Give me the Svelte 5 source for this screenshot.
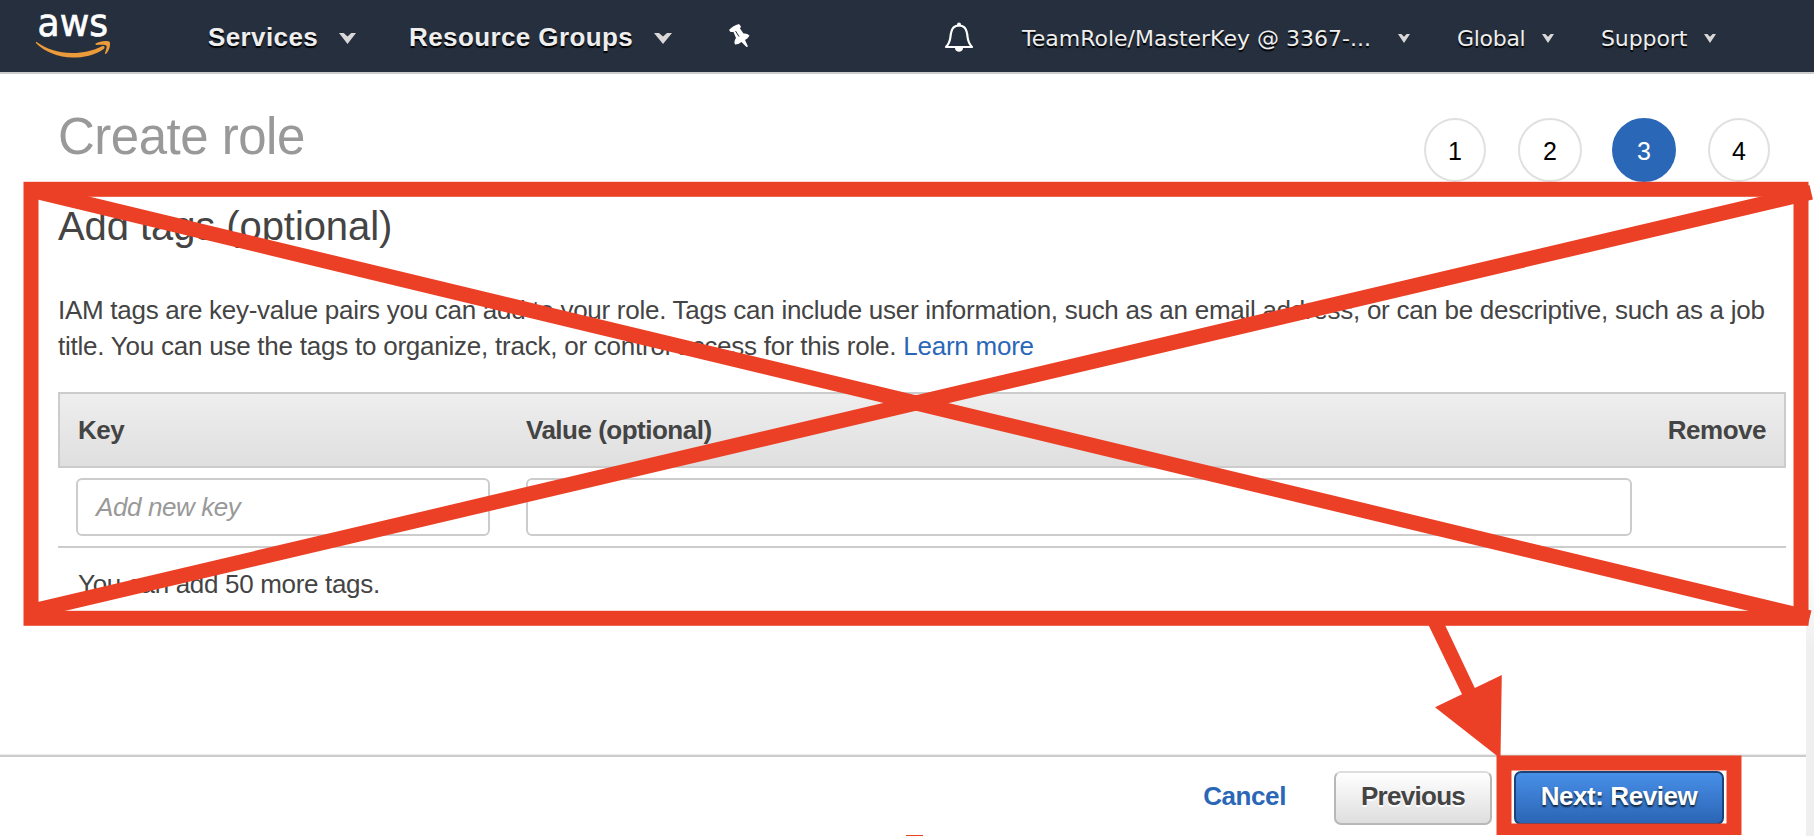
<script>
  const steps = [1, 2, 3, 4];
  const current = 3;
</script>

{#snippet caret(w, h)}
  <svg class="caret" width={w} height={h} viewBox="0 0 18 11" preserveAspectRatio="none">
    <path d="M0 0H5L9 3.500L13 0H18L9 11Z" fill="#d9d7d7" />
  </svg>
{/snippet}

<div class="page">
  <header>
    <svg class="logo" width="76" height="50" viewBox="0 0 76 50">
      <text x="1.500" y="28" textLength="70.500" lengthAdjust="spacingAndGlyphs">aws</text>
      <path d="M0.300 33.800C10 41 22 45 36 45C48 45 57 42.600 66 38.200C68 37.300 69.700 39.500 67.700 41C59 47.500 47 49.600 37 49.600C22 49.600 9 43.800 0.300 35.600Q-0.800 34 0.300 33.800Z" fill="#ec9b3b" />
      <path d="M59.700 35.600C64 32.600 72 32.300 73.700 34C74.800 37 73 43 70.300 45.600C69.300 46.300 68.600 45.900 69 44.900C70.200 41.700 71.200 38.500 70.400 37.500C69 36.400 64.500 36.700 61 37C59.600 37.100 58.900 36.300 59.700 35.600Z" fill="#ec9b3b" />
    </svg>
    <nav class="left">
      <a class="services"><span>Services</span> {@render caret(17, 11)}</a>
      <a class="groups"><span>Resource Groups</span> {@render caret(18, 11)}</a>
      <svg class="pin" width="22" height="24" viewBox="0 0 22 24">
        <path d="M0 6Q4 1.500 10 0L12 2.500L11 4.500L14.500 9.500Q18 9 20.500 11.500Q19 15 16 16L19 22.500L17.500 23L12.500 18Q9.500 20.500 6 20.500Q4.500 17.500 7 14L4.500 8L1.500 8Z" fill="#fff" />
        <path d="M6.500 7L10 12.500" stroke="#262f3e" stroke-width="1" />
      </svg>
    </nav>
    <nav class="right">
      <svg class="bell" width="30" height="32" viewBox="0 0 30 32">
        <path d="M2 25C7 20 6 16 7 11C8 5 11 3.500 15 3.500S22 5 23 11C24 16 23 20 28 25Z" fill="none" stroke="#fff" stroke-width="2.200" stroke-linejoin="round" />
        <circle cx="15" cy="2.500" r="2" fill="#fff" />
        <path d="M11 26H19C19 31 11 31 11 26Z" fill="#fff" />
      </svg>
      <a class="account"><span>TeamRole/MasterKey @ 3367-...</span> {@render caret(12, 9)}</a>
      <a class="region"><span>Global</span> {@render caret(12, 9)}</a>
      <a class="support"><span>Support</span> {@render caret(12, 9)}</a>
    </nav>
  </header>

  <main>
    <div class="title">
      <h1>Create role</h1>
      <ol>
        {#each steps as step}
          <li class:active={step === current}>{step}</li>
        {/each}
      </ol>
    </div>
    <h2>Add tags (optional)</h2>
    <p class="intro"><span class="l1">IAM tags are key-value pairs you can add to your role. Tags can include user information, such as an email address, or can be descriptive, such as a job</span><br /><span class="l2">title. You can use the tags to organize, track, or control access for this role. <a>Learn more</a></span></p>
    <div class="thead"><b class="key">Key</b><b class="val">Value (optional)</b><b class="rem">Remove</b></div>
    <div class="row"><div class="field k">Add new key</div><div class="field v"></div></div>
    <p class="more">You can add 50 more tags.</p>
  </main>

  <footer>
    <a class="cancel">Cancel</a>
    <button class="previous">Previous</button>
    <button class="next">Next: Review</button>
  </footer>
  <div class="gutter"></div>

  <svg class="marks" width="1814" height="836" viewBox="0 0 1814 836">
    <g fill="none" stroke="#eb4026" stroke-width="15">
      <rect x="31" y="189.300" width="1770" height="429" />
      <path d="M31 190.300L1809.700 617.800M31 611.300L1811.200 192.300" />
    </g>
    <g fill="#eb4026">
      <path d="M1428.500 625H1445L1474.800 688L1501.800 675L1500.500 757H1498.500L1435 707.300L1462 694.300Z" />
      <path fill-rule="evenodd" d="M1496.500 755.500H1741.500V835H1496.500ZM1511.500 770.500V823.500H1726.500V770.500Z" />
      <path d="M906 835H923V836H906Z" />
    </g>
  </svg>
</div>

<style>
  :global(body) { margin: 0; background: #fff; overflow: hidden; }
  .page { position: relative; width: 1814px; height: 836px; display: flex; flex-direction: column; overflow: hidden; font: 26px/36px "Liberation Sans", Arial, sans-serif; color: #444; background: #fff; }
  header { box-sizing: border-box; height: 74px; flex: none; display: flex; background: #262f3e; border-bottom: 2px solid #ccc; color: #eee; text-shadow: 0 2px 1px #000; white-space: nowrap; }
  .logo { margin: 8px 0 0 36px; flex: none; overflow: visible; text-shadow: none; }
  .logo text { font: 38px "DejaVu Sans", sans-serif; fill: #fff; stroke: #fff; stroke-width: 0.7px; }
  nav { display: flex; height: 72px; }
  nav a { display: flex; align-items: center; justify-content: space-between; height: 73px; }
  .caret { flex: none; display: block; margin-top: 4px; }
  .left { margin-left: 96px; font-weight: bold; letter-spacing: 0.4px; }
  .services { width: 148px; }
  .groups { width: 263px; margin-left: 53px; }
  .pin { margin: 24px 0 0 57px; }
  .right { margin-left: 193px; font: 22px "DejaVu Sans", Verdana, sans-serif; }
  .right span { padding-top: 3px; }
  .right .caret { margin-top: 3px; }
  .bell { margin-top: 22px; }
  .account { width: 388px; margin-left: 48px; }
  .region { width: 97px; margin-left: 47px; letter-spacing: -0.3px; }
  .support { width: 115px; margin-left: 47px; letter-spacing: -0.1px; }
  main { flex: none; height: 681px; box-sizing: border-box; padding: 44px 28px 0 58px; }
  .title { display: flex; justify-content: space-between; height: 82px; }
  h1 { margin: 0; font-weight: 400; font-size: 51px; line-height: 38px; letter-spacing: -0.5px; color: #999; }
  ol { margin: 0 16px 0 0; padding: 0; list-style: none; display: flex; gap: 32px; }
  li { box-sizing: border-box; width: 62px; height: 64px; border: 2px solid #e0e0e0; border-radius: 50%; text-align: center; line-height: 62px; font-size: 25px; color: #000; }
  li.active { background: #2b67b7; border-color: #2b67b7; color: #fff; width: 64px; }
  li:nth-child(2) { width: 64px; }
  li:nth-child(3) { margin-left: -2px; }
  h2 { margin: 0; font-weight: 400; font-size: 40px; line-height: 52px; letter-spacing: -0.08px; }
  .intro { margin: 40px 0 0; white-space: nowrap; height: 100px; }
  .l1 { letter-spacing: -0.274px; }
  .l2 { letter-spacing: -0.235px; }
  .intro a, .cancel { color: #2b67b7; }
  .thead { box-sizing: border-box; height: 76px; border: 2px solid #ccc; background: linear-gradient(#eee, #dfdfdf); display: flex; align-items: center; padding: 0 18px; letter-spacing: -0.5px; }
  .key { width: 448px; }
  .rem { margin-left: auto; }
  .row { height: 68px; padding: 10px 0 0 18px; display: flex; gap: 36px; border-bottom: 2px solid #ccc; }
  .field { box-sizing: border-box; height: 58px; border: 2px solid #ccc; border-radius: 6px; padding-left: 18px; line-height: 54px; font-style: italic; color: #999; letter-spacing: -0.4px; }
  .k { width: 414px; }
  .v { width: 1106px; }
  .more { margin: 18px 0 0 20px; letter-spacing: -0.32px; }
  footer { box-sizing: border-box; flex: none; height: 81px; width: 1806px; border-top: 2px solid #ccc; box-shadow: 0 -1px 1px #eee; display: flex; justify-content: flex-end; padding: 14px 82px 0 0; font-weight: bold; }
  .cancel { line-height: 50px; margin-right: 48px; letter-spacing: -0.4px; }
  button { box-sizing: border-box; height: 54px; padding: 0 0 4px; font: bold 26px "Liberation Sans", Arial, sans-serif; border-radius: 7px; border: 2px solid #b8b8b8; }
  .previous { width: 158px; margin-right: 22px; letter-spacing: -0.7px; color: #444; background: linear-gradient(#fff, #dedede); border-top-color: #ddd; text-shadow: 0 2px 1px #fff; }
  .next { width: 210px; letter-spacing: -0.45px; color: #fff; background: linear-gradient(#488fe8, #2b65b5); border-color: #1d4478; text-shadow: 0 2px 2px #123; }
  .gutter { position: absolute; left: 1806px; top: 560px; width: 8px; height: 276px; background: linear-gradient(#fff, #efefef 90px); }
  .marks { position: absolute; left: 0; top: 0; pointer-events: none; }
</style>
